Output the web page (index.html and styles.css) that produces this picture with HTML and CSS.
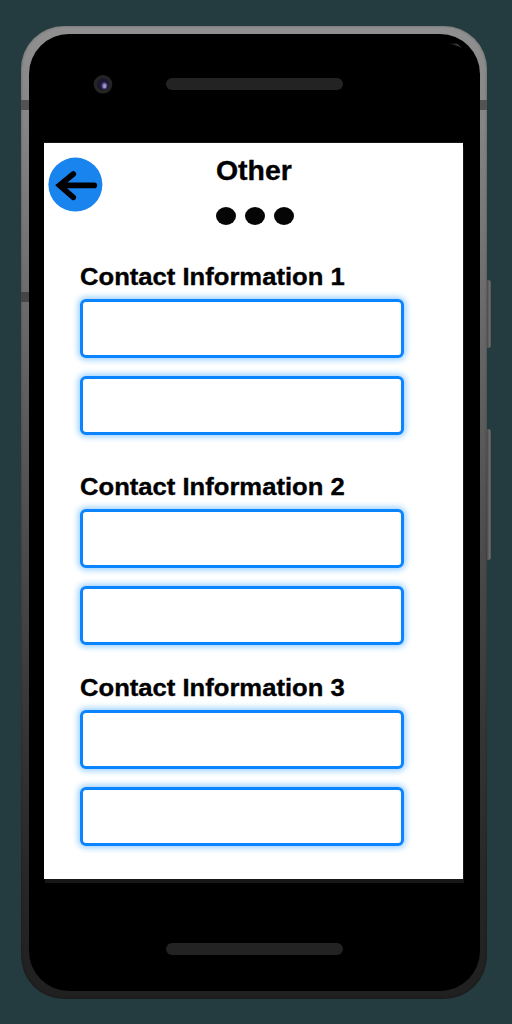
FILE: index.html
```html
<!DOCTYPE html>
<html lang="en">
<head>
<meta charset="utf-8">
<title>Other</title>
<link rel="stylesheet" href="styles.css">
</head>
<body>
<div class="phone">
  <i class="band band-left-top"></i>
  <i class="band band-right-top"></i>
  <i class="band band-left-low"></i>
  <i class="side-key power"></i>
  <i class="side-key volume"></i>
  <div class="face">
    <div class="bezel-top">
      <svg class="camera" width="20" height="20" viewBox="0 0 20 20">
        <circle cx="10" cy="10.300" r="9.300" fill="#242424"/>
        <circle cx="10" cy="10.300" r="6" fill="#1c1630"/>
        <ellipse cx="11.400" cy="11.800" rx="3" ry="3.500" fill="#514781"/>
        <ellipse cx="11.600" cy="12" rx="1.700" ry="2.300" fill="#9d94cc"/>
      </svg>
      <i class="speaker"></i>
      <svg class="glint" width="18" height="8" viewBox="0 0 18 8">
        <defs><linearGradient id="g"><stop offset="0" stop-color="#000"/><stop offset=".65" stop-color="#3c3c3c"/><stop offset="1" stop-color="#0c0c0c"/></linearGradient></defs>
        <path d="M1 .5H10Q14 1 16.500 6Q11 1.800 1 .5Z" fill="url(#g)"/>
      </svg>
    </div>
    <main class="screen">
      <header class="header">
        <button class="back" aria-label="Back">
          <svg width="55" height="55" viewBox="0 0 55 55">
            <circle cx="27.400" cy="27.600" r="27" fill="#1984ed"/>
            <path d="M25.300 17L11.500 28.400L25.300 40.300M12 28.400H46.300" fill="none" stroke="#000" stroke-width="5.600" stroke-linecap="round" stroke-linejoin="miter"/>
            <path d="M11 28.400L19 22V35Z"/>
          </svg>
        </button>
        <div class="heading">
          <h1>Other</h1>
          <div class="dots"><i></i><i></i><i></i></div>
        </div>
      </header>
      <form class="contacts">
        <section><h2>Contact Information 1</h2><input type="text"><input type="text"></section>
        <section><h2>Contact Information 2</h2><input type="text"><input type="text"></section>
        <section><h2>Contact Information 3</h2><input type="text"><input type="text"></section>
      </form>
    </main>
    <div class="bezel-bottom"><i class="speaker"></i></div>
  </div>
</div>
</body>
</html>
```
FILE: styles.css
```css
* { box-sizing: border-box; }
body {
  margin: 0;
  height: 1024px;
  padding: 26px 25px 25px 21px;
  overflow: hidden;
  background: #243c40;
  font-family: "Liberation Sans", Arial, sans-serif;
}
.phone {
  position: relative;
  width: 466px;
  height: 973px;
  padding: 8px 7px 8px 8px;
  border-radius: 43px;
  background: linear-gradient(#909090, #858585 10%, #6c6c6c 28%, #505050 50%, #353535 73%, #252525 90%, #202020);
  box-shadow: inset 0 0 2px 1px rgba(0, 0, 0, .15);
}
.face {
  display: flex;
  flex-direction: column;
  height: 957px;
  border-radius: 40px;
  background: #000;
}
.band {
  position: absolute;
  height: 10px;
  width: 8px;
  background: #525252;
}
.band-left-top { left: 0; top: 74px; }
.band-right-top { right: 0; top: 74px; width: 7px; }
.band-left-low { left: 0; top: 266px; background: #454545; }
.side-key {
  position: absolute;
  left: 466px;
  width: 4px;
  border-radius: 0 3px 3px 0;
  background: linear-gradient(90deg, #484848, #6c6c6c 60%, #555);
}
.power { top: 254px; height: 68px; }
.volume { top: 403px; height: 131px; }
.bezel-top {
  position: relative;
  display: flex;
  align-items: center;
  height: 109px;
  padding: 0 0 9px 64px;
}
.camera { flex: none; }
.speaker {
  display: block;
  width: 177px;
  height: 12px;
  border-radius: 6px;
  background: #232323;
}
.bezel-top .speaker { margin-left: 53px; }
.glint { position: absolute; left: 417px; top: 9px; }
.screen {
  flex: none;
  width: 419px;
  height: 736px;
  margin-left: 15px;
  background: #fff;
  box-shadow: 1px 4px 0 #171717, 0 -1px 0 #171717;
}
.header {
  display: flex;
  height: 119px;
  padding: 14px 0 0 4px;
}
.back {
  width: 55px;
  height: 55px;
  padding: 0;
  border: 0;
  background: none;
}
.back svg { display: block; }
.heading { margin-left: 113px; }
h1, h2 {
  margin: 0;
  color: #000;
  font-weight: 700;
  white-space: nowrap;
  transform-origin: 0 50%;
  -webkit-text-stroke: .35px #000;
}
h1 {
  font-size: 27px;
  line-height: 28px;
  transform: scaleX(1.053);
}
.dots { display: flex; gap: 9px; padding-top: 22px; }
.dots i {
  width: 20px;
  height: 18px;
  border-radius: 50%;
  background: #050505;
}
.contacts { padding-left: 36px; }
section { width: 324px; height: 210px; }
section:nth-child(2) { height: 201px; }
section:last-child { height: 180px; }
h2 {
  height: 37px;
  font-size: 23.500px;
  line-height: 30px;
  transform: scaleX(1.09);
}
input {
  display: block;
  width: 324px;
  height: 59px;
  margin: 0 0 18px;
  padding: 0 12px;
  border: 3px solid #0a84ff;
  border-radius: 6px;
  outline: 0;
  background: #fff;
  box-shadow: 0 0 6px 2px #9bd0ff;
}
.bezel-bottom {
  display: flex;
  padding: 64px 0 0 137px;
}
```
